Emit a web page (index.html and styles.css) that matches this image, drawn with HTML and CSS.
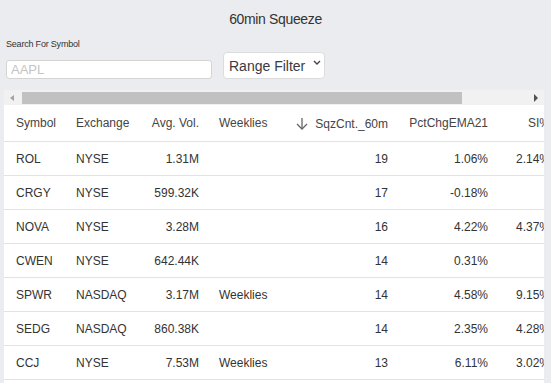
FILE: index.html
```html
<!DOCTYPE html>
<html>
<head>
<meta charset="utf-8">
<link rel="stylesheet" href="styles.css">
</head>
<body>
<div class="title">60min Squeeze</div>
<div class="controls">
  <div class="search">
    <label class="search-label">Search For Symbol</label>
    <input class="search-input" type="text" placeholder="AAPL">
  </div>
  <button class="range-btn">Range Filter
    <svg class="chev" width="8" height="5" viewBox="0 0 8 5"><polyline points="1,1 4,4 7,1" fill="none" stroke="#444" stroke-width="1.4"/></svg>
  </button>
</div>
<div class="card">
  <div class="hscroll">
    <div class="arrow-cell"><span class="tri-left"></span></div>
    <div class="thumb"></div>
    <div class="track-rest"></div>
    <div class="arrow-cell"><span class="tri-right"></span></div>
  </div>
  <div class="table-wrap">
    <table class="grid">
      <colgroup>
        <col class="c-sym"><col class="c-exch"><col class="c-vol"><col class="c-week"><col class="c-sqz"><col class="c-pct"><col class="c-si">
      </colgroup>
      <thead>
        <tr>
          <th>Symbol</th>
          <th>Exchange</th>
          <th class="num">Avg. Vol.</th>
          <th>Weeklies</th>
          <th class="num sorted"><svg class="sort" width="12" height="13" viewBox="0 0 12 13"><line x1="6" y1="1" x2="6" y2="12" stroke="#666" stroke-width="1.3"/><polyline points="1,7 6,12 11,7" fill="none" stroke="#666" stroke-width="1.3"/></svg><span>SqzCnt._60m</span></th>
          <th class="num">PctChgEMA21</th>
          <th class="num">SI%</th>
        </tr>
      </thead>
      <tbody>
        <tr><td>ROL</td><td>NYSE</td><td class="num">1.31M</td><td></td><td class="num">19</td><td class="num">1.06%</td><td class="num">2.14%</td></tr>
        <tr><td>CRGY</td><td>NYSE</td><td class="num">599.32K</td><td></td><td class="num">17</td><td class="num">-0.18%</td><td class="num"></td></tr>
        <tr><td>NOVA</td><td>NYSE</td><td class="num">3.28M</td><td></td><td class="num">16</td><td class="num">4.22%</td><td class="num">4.37%</td></tr>
        <tr><td>CWEN</td><td>NYSE</td><td class="num">642.44K</td><td></td><td class="num">14</td><td class="num">0.31%</td><td class="num"></td></tr>
        <tr><td>SPWR</td><td>NASDAQ</td><td class="num">3.17M</td><td>Weeklies</td><td class="num">14</td><td class="num">4.58%</td><td class="num">9.15%</td></tr>
        <tr><td>SEDG</td><td>NASDAQ</td><td class="num">860.38K</td><td></td><td class="num">14</td><td class="num">2.35%</td><td class="num">4.28%</td></tr>
        <tr><td>CCJ</td><td>NYSE</td><td class="num">7.53M</td><td>Weeklies</td><td class="num">13</td><td class="num">6.11%</td><td class="num">3.02%</td></tr>
        <tr><td>&nbsp;</td><td></td><td></td><td></td><td></td><td></td><td></td></tr>
      </tbody>
    </table>
  </div>
</div>
</body>
</html>
```

FILE: styles.css
```css
html, body {
  margin: 0;
  padding: 0;
  height: 100%;
  overflow: hidden;
}
body {
  background: #ebecf0;
  font-family: "Liberation Sans", Arial, sans-serif;
  color: #333;
}
.title {
  text-align: center;
  font-size: 14px;
  letter-spacing: -0.35px;
  line-height: 16px;
  padding-top: 11px;
  color: #333;
}
.controls {
  display: flex;
  align-items: flex-end;
  padding: 0 0 0 6px;
  margin-top: 12px;
}
.search {
  display: flex;
  flex-direction: column;
}
.search-label {
  font-size: 9px;
  letter-spacing: -0.2px;
  line-height: 10px;
  color: #333;
  margin-bottom: 11px;
}
.search-input {
  box-sizing: border-box;
  width: 206px;
  height: 19px;
  margin: 0;
  border: 1px solid #d4d4d4;
  border-radius: 3px;
  background: #fff;
  padding: 0 4px;
  font-family: "Liberation Sans", Arial, sans-serif;
  font-size: 13px;
  outline: none;
}
.search-input::placeholder {
  color: #c4c4c4;
}
.range-btn {
  box-sizing: border-box;
  margin: 0 0 0 11px;
  width: 102px;
  height: 27px;
  background: #fff;
  border: 1px solid #dcdcdc;
  border-radius: 4px;
  font-family: "Liberation Sans", Arial, sans-serif;
  font-size: 14px;
  color: #3a3a44;
  padding: 0 0 0 5px;
  display: flex;
  align-items: center;
  text-align: left;
}
.chev {
  margin-left: 8px;
  margin-top: -6px;
}
.card {
  margin: 11px 0 0 4px;
  width: 540px;
  background: #fff;
}
.hscroll {
  display: flex;
  height: 15px;
  background: #f1f1f1;
}
.arrow-cell {
  width: 16px;
  display: flex;
  align-items: center;
  justify-content: center;
}
.tri-left {
  width: 0;
  height: 0;
  border-top: 3.5px solid transparent;
  border-bottom: 3.5px solid transparent;
  border-right: 4px solid #a3a3a3;
}
.tri-right {
  width: 0;
  height: 0;
  border-top: 4px solid transparent;
  border-bottom: 4px solid transparent;
  border-left: 4px solid #505050;
}
.thumb {
  width: 440px;
  margin: 2px 0 1px 2px;
  background: #c1c1c1;
}
.track-rest {
  flex: 1;
}
.table-wrap {
  overflow: hidden;
  width: 540px;
  height: 278px;
}
.grid {
  table-layout: fixed;
  border-collapse: collapse;
  width: 554px;
  font-size: 12px;
}
.c-sym { width: 60px; }
.c-exch { width: 68px; }
.c-vol { width: 75px; }
.c-week { width: 76px; }
.c-sqz { width: 113px; }
.c-pct { width: 100px; }
.c-si { width: 62px; }
.grid th, .grid td {
  padding: 0 8px 0 12px;
  text-align: left;
  white-space: nowrap;
  overflow: visible;
  border-bottom: 1px solid #e3e3e3;
}
.grid th {
  height: 36px;
  font-weight: normal;
  color: #444;
}
.grid td {
  height: 33px;
  color: #333;
}
.grid .num {
  text-align: right;
}
.sorted span {
  vertical-align: middle;
}
.sort {
  vertical-align: middle;
  margin-right: 7px;
}
```
